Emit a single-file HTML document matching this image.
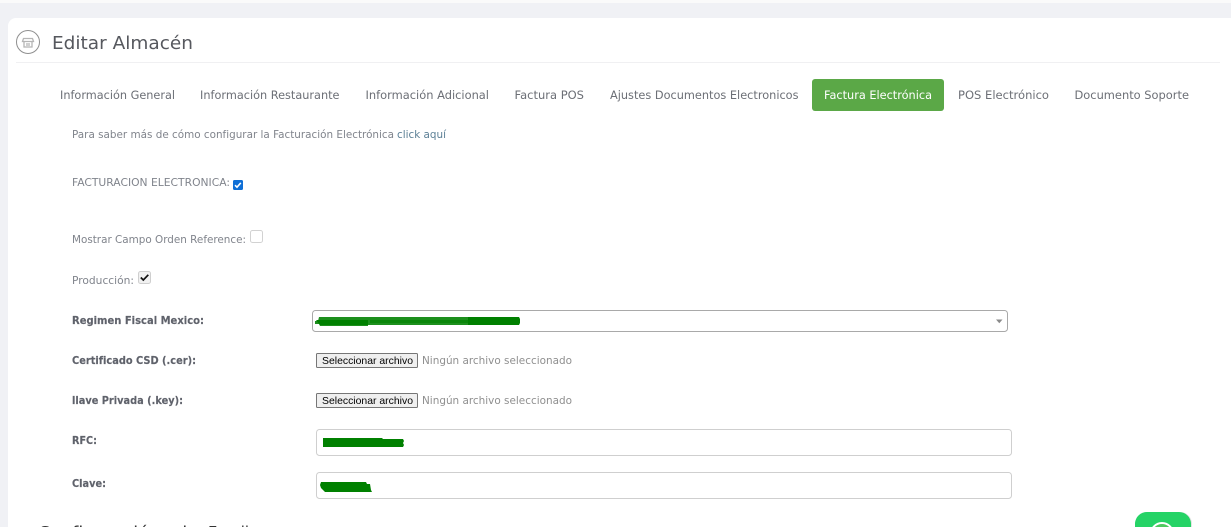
<!DOCTYPE html>
<html lang="es">
<head>
<meta charset="utf-8">
<title>Editar Almacén</title>
<style>
html,body{margin:0;padding:0;width:1231px;height:527px;overflow:hidden;background:#f0f1f5}
svg{position:absolute;left:0;top:0;display:block}
text{font-family:"DejaVu Sans","Liberation Sans",sans-serif}
.t{font-size:11.500px;fill:#6c6f76}
.s{font-size:10.500px;fill:#80848c}
.b{font-size:10.500px;font-weight:bold;fill:#5f626b;stroke:#5f626b;stroke-width:.15}
.f{font-family:"Liberation Sans",sans-serif;font-size:10.500px;fill:#000}
.n{font-size:10.500px;fill:#8f8f8f}
</style>
</head>
<body>
<svg width="1231" height="527" viewBox="0 0 1231 527" xmlns="http://www.w3.org/2000/svg">
  <rect x="0" y="0" width="1231" height="3" fill="#fafafa"/>
  <path d="M8 527V26a8 8 0 0 1 8-8H1231V527Z" fill="#fff"/>
  <rect x="16" y="62" width="1204" height="1" fill="#f0f0f2"/>

  <circle cx="28" cy="42" r="11.500" fill="none" stroke="#8f8f8f" stroke-width="1"/>
  <path d="M23.500 38.500h9l1 3h-11zM24 41.500v5.500h8v-5.500" fill="none" stroke="#b5b5b5" stroke-width="1.300"/>
  <rect x="26" y="43" width="4" height="3" fill="#d0d0d0"/>
  <text x="52" y="49" font-size="18" fill="#56585e" textLength="141" lengthAdjust="spacingAndGlyphs">Editar Almacén</text>

  <text class="t" x="60" y="99" textLength="115" lengthAdjust="spacingAndGlyphs">Información General</text>
  <text class="t" x="200" y="99" textLength="139.500" lengthAdjust="spacingAndGlyphs">Información Restaurante</text>
  <text class="t" x="365.500" y="99" textLength="123.500" lengthAdjust="spacingAndGlyphs">Información Adicional</text>
  <text class="t" x="514.500" y="99" textLength="69.500" lengthAdjust="spacingAndGlyphs">Factura POS</text>
  <text class="t" x="610" y="99" textLength="188.500" lengthAdjust="spacingAndGlyphs">Ajustes Documentos Electronicos</text>
  <rect x="812" y="79" width="132" height="32" rx="3" fill="#5ba847"/>
  <text x="824" y="99" font-size="11.500" fill="#fff" textLength="108" lengthAdjust="spacingAndGlyphs">Factura Electrónica</text>
  <text class="t" x="958" y="99" textLength="91" lengthAdjust="spacingAndGlyphs">POS Electrónico</text>
  <text class="t" x="1074.500" y="99" textLength="114.500" lengthAdjust="spacingAndGlyphs">Documento Soporte</text>

  <text class="s" x="72" y="138" textLength="322" lengthAdjust="spacingAndGlyphs">Para saber más de cómo configurar la Facturación Electrónica</text>
  <text x="397" y="138" font-size="10.500" fill="#5b7f95" textLength="49" lengthAdjust="spacingAndGlyphs">click aquí</text>

  <text class="s" x="72" y="186" textLength="158" lengthAdjust="spacingAndGlyphs">FACTURACION ELECTRONICA:</text>
  <rect x="233" y="180" width="10" height="10" rx="1.500" fill="#0f6fd6"/>
  <path d="M235 185.200l2 2 3.800-4.300" fill="none" stroke="#fff" stroke-width="1.600"/>

  <text class="s" x="72" y="243" textLength="174" lengthAdjust="spacingAndGlyphs">Mostrar Campo Orden Reference:</text>
  <rect x="250.500" y="230.500" width="12" height="12" rx="2" fill="#fff" stroke="#d2d2d2"/>

  <text class="s" x="72" y="284" textLength="62" lengthAdjust="spacingAndGlyphs">Producción:</text>
  <rect x="138.500" y="271.500" width="12" height="12" rx="2" fill="#f1f1f1" stroke="#cfcfcf"/>
  <path d="M140.800 277.500l2.500 2.500 5-5.200" fill="none" stroke="#111" stroke-width="1.700"/>

  <text class="b" x="72" y="324" textLength="132" lengthAdjust="spacingAndGlyphs">Regimen Fiscal Mexico:</text>
  <rect x="312.500" y="310.500" width="695" height="21" rx="3" fill="#fff" stroke="#a9a9a9"/>
  <path d="M319 317H470V325H368L368 326H320L319 324H315V321H318Z" fill="#1d8f1d"/>
  <path d="M316 320H368V325H320Z" fill="#008000"/>
  <path d="M370 320H470V323H370Z" fill="#0a860a"/>
  <path d="M468 317H519L520 319V323L519 325H468Z" fill="#008000"/>
  <path d="M996 319.500h6.500l-3.200 3.800z" fill="#8a8a8a"/>

  <text class="b" x="72" y="364" textLength="124" lengthAdjust="spacingAndGlyphs">Certificado CSD (.cer):</text>
  <rect x="316.500" y="353.500" width="101" height="14" rx="1" fill="#efefef" stroke="#767676"/>
  <text class="f" x="322" y="364" textLength="91" lengthAdjust="spacingAndGlyphs">Seleccionar archivo</text>
  <text class="n" x="422" y="364" textLength="150" lengthAdjust="spacingAndGlyphs">Ningún archivo seleccionado</text>

  <text class="b" x="72" y="404" textLength="111" lengthAdjust="spacingAndGlyphs">llave Privada (.key):</text>
  <rect x="316.500" y="393.500" width="101" height="14" rx="1" fill="#efefef" stroke="#767676"/>
  <text class="f" x="322" y="404" textLength="91" lengthAdjust="spacingAndGlyphs">Seleccionar archivo</text>
  <text class="n" x="422" y="404" textLength="150" lengthAdjust="spacingAndGlyphs">Ningún archivo seleccionado</text>

  <text class="b" x="72" y="444" textLength="25" lengthAdjust="spacingAndGlyphs">RFC:</text>
  <rect x="316.500" y="429.500" width="695" height="26" rx="3" fill="#fff" stroke="#cfcfcf"/>
  <path d="M323 438H382L383 439H403L404 441L403 443L404 445L403 447H323Z" fill="#008000"/>

  <text class="b" x="72" y="487" textLength="34" lengthAdjust="spacingAndGlyphs">Clave:</text>
  <rect x="316.500" y="472.500" width="695" height="26" rx="3" fill="#fff" stroke="#cfcfcf"/>
  <path d="M321 482H366L367 484H370L371 490L372 492H325L323 490L321 488L320 485Z" fill="#008000"/>

  <text x="38" y="538.500" font-size="17" fill="#333" textLength="122" lengthAdjust="spacingAndGlyphs">Configuración</text>
  <text x="176" y="538.500" font-size="17" fill="#333" textLength="22" lengthAdjust="spacingAndGlyphs">de</text>
  <text x="208" y="538.500" font-size="17" fill="#333" textLength="41" lengthAdjust="spacingAndGlyphs">Email</text>

  <path d="M1136 527v-4a12 12 0 0 1 12-11h32a12 12 0 0 1 12 11v4Z" fill="#d8d8d8" opacity=".7"/>
  <path d="M1135 527v-4a12 12 0 0 1 12-11h32a12 12 0 0 1 12 11v4Z" fill="#25d366"/>
  <circle cx="1162" cy="534" r="11" fill="#4fc95f" stroke="#fff" stroke-width="2"/>
</svg>
</body>
</html>
